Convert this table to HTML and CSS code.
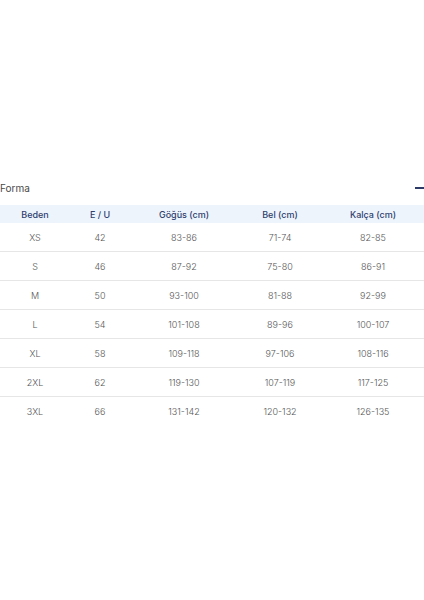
FILE: index.html
```html
<!DOCTYPE html>
<html lang="tr">
<head>
    <meta charset="UTF-8">
    <meta name="viewport" content="width=device-width, initial-scale=1.0">
    <title>Beden Tablosu</title>
    <link rel="stylesheet" href="styles.css">
</head>
<body>
    <div class="size-guide">
        <div class="section-head">
            <span class="section-title">Forma</span>
            <span class="toggle"></span>
        </div>
        <div class="size-table">
            <div class="row head">
                <div>Beden</div><div>E / U</div><div>Göğüs (cm)</div><div>Bel (cm)</div><div>Kalça (cm)</div>
            </div>
            <div class="row">
                <div>XS</div><div>42</div><div>83-86</div><div>71-74</div><div>82-85</div>
            </div>
            <div class="row">
                <div>S</div><div>46</div><div>87-92</div><div>75-80</div><div>86-91</div>
            </div>
            <div class="row">
                <div>M</div><div>50</div><div>93-100</div><div>81-88</div><div>92-99</div>
            </div>
            <div class="row">
                <div>L</div><div>54</div><div>101-108</div><div>89-96</div><div>100-107</div>
            </div>
            <div class="row">
                <div>XL</div><div>58</div><div>109-118</div><div>97-106</div><div>108-116</div>
            </div>
            <div class="row">
                <div>2XL</div><div>62</div><div>119-130</div><div>107-119</div><div>117-125</div>
            </div>
            <div class="row">
                <div>3XL</div><div>66</div><div>131-142</div><div>120-132</div><div>126-135</div>
            </div>
        </div>
    </div>
</body>
</html>
```
FILE: styles.css
```css
body {
    margin: 0;
    padding: 0;
    background-color: #fff;
    font-family: Inter, "Noto Sans", sans-serif;
    color: #555;
}
.size-guide {
    padding-top: 180px;
}
.section-head {
    display: flex;
    justify-content: space-between;
    align-items: center;
    height: 16px;
    margin-bottom: 9px;
}
.section-title {
    font-size: 10px;
    color: #4a4a4a;
}
.toggle {
    width: 9px;
    height: 1.5px;
    background-color: #2b3a67;
}
.size-table .row {
    display: grid;
    grid-template-columns: 70px 60px 108px 84px 102px;
    align-items: center;
    height: 28px;
    border-bottom: 1px solid #e6e6e6;
    font-size: 9px;
    font-weight: 300;
    text-align: center;
}
.size-table .row:last-child {
    border-bottom: none;
}
.size-table .row.head {
    height: 18px;
    border-bottom: none;
    background-color: #eef4fc;
    color: #2f3f6e;
    font-weight: 500;
}
```
